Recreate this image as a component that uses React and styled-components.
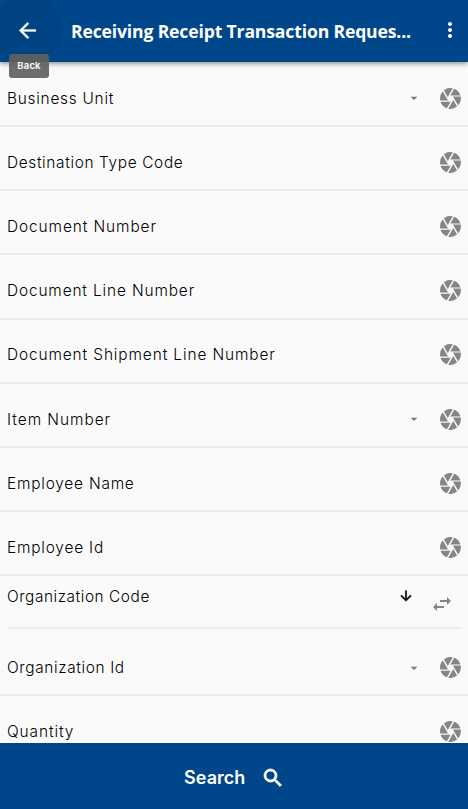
import React from "react";
import styled, { createGlobalStyle } from "styled-components";
import {
  MdArrowBack,
  MdMoreVert,
  MdCamera,
  MdArrowDropDown,
  MdArrowDownward,
  MdSwapHoriz,
  MdSearch,
} from "react-icons/md";

const GlobalStyle = createGlobalStyle`
  * { box-sizing: border-box; }
  html, body { margin: 0; padding: 0; overflow: hidden; }
  svg { display: block; flex: none; }
`;

const Screen = styled.div`
  width: 468px;
  height: 809px;
  display: flex;
  flex-direction: column;
  overflow: hidden;
  background: #fafafa;
  color: #000;
  font-family: Inter, "Liberation Sans", sans-serif;
`;

const Header = styled.header`
  position: relative;
  z-index: 1;
  flex: none;
  height: 62px;
  display: flex;
  align-items: center;
  padding: 0 6px 2px 15px;
  color: #fff;
  background: radial-gradient(circle at 27px 30px, #004383 34px, #00468b 35px);
  box-shadow: 0 2px 4px rgba(0, 0, 0, 0.3), 0 1px 8px rgba(0, 0, 0, 0.14);
`;

const IconButton = styled.button`
  flex: none;
  display: flex;
  padding: 0;
  border: 0;
  background: none;
  color: inherit;
`;

const Title = styled.h1`
  flex: 1;
  margin: 2px 0 0 31px;
  font: 700 17.6px/24px "Open Sans", "Noto Sans", sans-serif;
  letter-spacing: ${(p) => p.$tracking}px;
  white-space: nowrap;
`;

const Tooltip = styled.span`
  position: absolute;
  left: 9px;
  top: 54px;
  width: 40px;
  height: 24px;
  border-radius: 3px;
  background: rgba(97, 97, 97, 0.92);
  font-size: 9.5px;
  font-weight: 600;
  line-height: 24px;
  letter-spacing: 0.2px;
  text-align: center;
`;

const List = styled.main`
  flex: 1;
  min-height: 0;
  overflow: hidden;
  padding-top: 0.9px;
`;

const Row = styled.div`
  height: 64.17px;
  display: flex;
  align-items: center;
  padding: 8.6px 5.5px 0 7px;
  border-bottom: 2px solid #ebecee;
`;

const TransferRow = styled.div`
  height: 52.8px;
  margin: 0 7px;
  display: flex;
  align-items: flex-start;
  border-bottom: 2px solid #ededed;
`;

const Label = styled.span`
  flex: 1;
  padding-top: 1px;
  font-size: 15.4px;
  font-weight: 300;
  line-height: 20px;
  letter-spacing: ${(p) => p.$tracking}px;
  white-space: nowrap;
`;

const TransferLabel = styled(Label)`
  margin-top: 10px;
`;

const CaretSlot = styled.span`
  margin-right: 15.5px;
  color: #757575;
`;

const CameraSlot = styled.span`
  color: #858585;
`;

const DownSlot = styled.span`
  margin: 12px 16px 0 0;
  color: #000;
`;

const SwapSlot = styled.span`
  margin: 16px 7px 0 0;
  color: #858585;
`;

const SectionGap = styled.div`
  height: 3.4px;
`;

const SearchBar = styled.button`
  flex: none;
  height: 66px;
  display: flex;
  align-items: center;
  padding: 4px 0 0 184px;
  border: 0;
  color: #fff;
  background: #00468b;
  font: 600 18px/24px Inter, "Liberation Sans", sans-serif;
  text-align: left;
`;

const SearchText = styled.span`
  width: 77px;
  letter-spacing: 0.05px;
`;

const SearchGlyph = styled(MdSearch)`
  path:not([fill="none"]) {
    stroke: #fff;
    stroke-width: 0.8px;
  }
`;

const DownGlyph = styled(MdArrowDownward)`
  path:not([fill="none"]) {
    stroke: #000;
    stroke-width: 0.7px;
  }
`;

const BackGlyph = styled(MdArrowBack)`
  path:not([fill="none"]) {
    stroke: #fff;
    stroke-width: 0.3px;
  }
`;

const fieldsBefore = [
  { label: "Business Unit", tracking: 0.75, select: true },
  { label: "Destination Type Code", tracking: 0.65 },
  { label: "Document Number", tracking: 0.92 },
  { label: "Document Line Number", tracking: 0.87 },
  { label: "Document Shipment Line Number", tracking: 0.9 },
  { label: "Item Number", tracking: 0.98, select: true },
  { label: "Employee Name", tracking: 0.8 },
  { label: "Employee Id", tracking: 0.82 },
];

const fieldsAfter = [
  { label: "Organization Id", tracking: 0.64, select: true },
  { label: "Quantity", tracking: 0.92 },
];

function Field({ label, tracking, select }) {
  return (
    <Row>
      <Label $tracking={tracking}>{label}</Label>
      {select && (
        <CaretSlot>
          <MdArrowDropDown size={16} />
        </CaretSlot>
      )}
      <CameraSlot>
        <MdCamera size={25} />
      </CameraSlot>
    </Row>
  );
}

export default function App() {
  return (
    <Screen>
      <GlobalStyle />
      <Header>
        <IconButton aria-label="Back">
          <BackGlyph size={25} />
        </IconButton>
        <Title $tracking={-0.16}>Receiving Receipt Transaction Reques...</Title>
        <IconButton aria-label="More">
          <MdMoreVert size={24} />
        </IconButton>
        <Tooltip>Back</Tooltip>
      </Header>
      <List>
        {fieldsBefore.map((f) => (
          <Field key={f.label} {...f} />
        ))}
        <TransferRow>
          <TransferLabel $tracking={0.56}>Organization Code</TransferLabel>
          <DownSlot>
            <DownGlyph size={16} />
          </DownSlot>
          <SwapSlot>
            <MdSwapHoriz size={24} />
          </SwapSlot>
        </TransferRow>
        <SectionGap />
        {fieldsAfter.map((f) => (
          <Field key={f.label} {...f} />
        ))}
      </List>
      <SearchBar>
        <SearchText>Search</SearchText>
        <SearchGlyph size={24} />
      </SearchBar>
    </Screen>
  );
}
